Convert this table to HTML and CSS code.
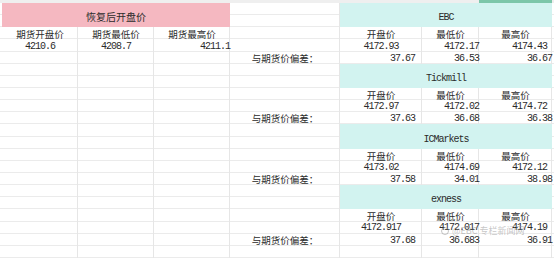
FILE: index.html
```html
<!DOCTYPE html>
<html lang="zh-CN">
<head>
<meta charset="utf-8">
<title>开盘价对比</title>
<link rel="stylesheet" href="styles.css">
</head>
<body>
<div class="page">
  <div class="colbar"><span class="colsel"></span></div>
  <div class="sheet">
    <div class="cell title pink" style="grid-row:1/3">恢复后开盘价</div>
    <div class="cell zh c-a" style="grid-row:3">期货开盘价</div>
    <div class="cell zh c-b" style="grid-row:3">期货最低价</div>
    <div class="cell zh c-c" style="grid-row:3">期货最高价</div>
    <div class="cell num c-a" style="grid-row:4">4210.6</div>
    <div class="cell num c-b" style="grid-row:4">4208.7</div>
    <div class="cell num c-c right" style="grid-row:4">4211.1</div>

    <div class="cell brand teal" style="grid-row:1/3">EBC</div>
    <div class="cell zh c-1" style="grid-row:3">开盘价</div>
    <div class="cell zh c-2" style="grid-row:3">最低价</div>
    <div class="cell zh c-3" style="grid-row:3">最高价</div>
    <div class="cell num c-1" style="grid-row:4">4172.93</div>
    <div class="cell num c-2 right" style="grid-row:4">4172.17</div>
    <div class="cell num c-3 right pad" style="grid-row:4">4174.43</div>
    <div class="cell zh c-d" style="grid-row:5">与期货价偏差：</div>
    <div class="cell num c-1 right pad1" style="grid-row:5">37.67</div>
    <div class="cell num c-2 right" style="grid-row:5">36.53</div>
    <div class="cell num c-3 right" style="grid-row:5">36.67</div>

    <div class="cell brand teal" style="grid-row:6/8">Tickmill</div>
    <div class="cell zh c-1" style="grid-row:8">开盘价</div>
    <div class="cell zh c-2" style="grid-row:8">最低价</div>
    <div class="cell zh c-3" style="grid-row:8">最高价</div>
    <div class="cell num c-1" style="grid-row:9">4172.97</div>
    <div class="cell num c-2 right" style="grid-row:9">4172.02</div>
    <div class="cell num c-3 right pad" style="grid-row:9">4174.72</div>
    <div class="cell zh c-d" style="grid-row:10">与期货价偏差：</div>
    <div class="cell num c-1 right pad1" style="grid-row:10">37.63</div>
    <div class="cell num c-2 right" style="grid-row:10">36.68</div>
    <div class="cell num c-3 right" style="grid-row:10">36.38</div>

    <div class="cell brand teal" style="grid-row:11/13">ICMarkets</div>
    <div class="cell zh c-1" style="grid-row:13">开盘价</div>
    <div class="cell zh c-2" style="grid-row:13">最低价</div>
    <div class="cell zh c-3" style="grid-row:13">最高价</div>
    <div class="cell num c-1" style="grid-row:14">4173.02</div>
    <div class="cell num c-2 right" style="grid-row:14">4174.69</div>
    <div class="cell num c-3 right pad" style="grid-row:14">4172.12</div>
    <div class="cell zh c-d" style="grid-row:15">与期货价偏差：</div>
    <div class="cell num c-1 right pad1" style="grid-row:15">37.58</div>
    <div class="cell num c-2 right" style="grid-row:15">34.01</div>
    <div class="cell num c-3 right" style="grid-row:15">38.98</div>

    <div class="cell brand teal" style="grid-row:16/18">exness</div>
    <div class="cell zh c-1" style="grid-row:18">开盘价</div>
    <div class="cell zh c-2" style="grid-row:18">最低价</div>
    <div class="cell zh c-3" style="grid-row:18">最高价</div>
    <div class="cell num c-1" style="grid-row:19">4172.917</div>
    <div class="cell num c-2 right" style="grid-row:19">4172.017</div>
    <div class="cell num c-3 right pad" style="grid-row:19">4174.19</div>
    <div class="cell zh c-d" style="grid-row:20">与期货价偏差：</div>
    <div class="cell num c-1 right pad1" style="grid-row:20">37.68</div>
    <div class="cell num c-2 right" style="grid-row:20">36.683</div>
    <div class="cell num c-3 right" style="grid-row:20">36.91</div>
  </div>
  <div class="watermark"><span class="wm-icon"></span>@EBC 专栏新闻网</div>
</div>
</body>
</html>
```

FILE: styles.css
```css
* { box-sizing: border-box; }
html, body { margin: 0; padding: 0; background: #fff; }
.page {
  position: relative;
  width: 554px;
  height: 258px;
  overflow: hidden;
  color: #2b2b2b;
}
.colbar {
  height: 3px;
  background: #efefef;
  display: flex;
  padding-left: 479px;
}
.colsel {
  width: 73px;
  height: 3px;
  background: #7cc6a9;
}
.sheet {
  display: grid;
  grid-template-columns: 2px 76px 76px 76px 110px 82px 57px 73px 2px;
  grid-template-rows: repeat(21, 12.14px);
  height: 255px;
  background-image:
    linear-gradient(#e6e6e6, #e6e6e6),
    linear-gradient(#e6e6e6, #e6e6e6),
    linear-gradient(#e6e6e6, #e6e6e6),
    linear-gradient(#e6e6e6, #e6e6e6),
    linear-gradient(#e6e6e6, #e6e6e6),
    linear-gradient(#e6e6e6, #e6e6e6),
    linear-gradient(#e6e6e6, #e6e6e6),
    repeating-linear-gradient(to bottom, transparent 0, transparent 11.14px, #ebebeb 11.14px, #ebebeb 12.14px);
  background-size: 1px 100%, 1px 100%, 1px 100%, 1px 100%, 1px 100%, 1px 100%, 1px 100%, 100% 100%;
  background-position: 77px 0, 153px 0, 229px 0, 339px 0, 421px 0, 478px 0, 551px 0, 0 0;
  background-repeat: no-repeat;
}
.cell {
  display: flex;
  align-items: flex-end;
  justify-content: center;
  white-space: nowrap;
  min-width: 0;
}
.zh {
  font-family: "Noto Sans CJK SC", sans-serif;
  font-size: 9.5px;
  line-height: 10px;
}
.num, .brand {
  font-family: "Liberation Mono", monospace;
  font-size: 10px;
  letter-spacing: -1px;
  line-height: 10px;
}
.right { justify-content: flex-end; }
.pad { padding-right: 5px; }
.pad1 { padding-right: 7px; }
.c-a { grid-column: 2; }
.c-b { grid-column: 3; }
.c-c { grid-column: 4; }
.c-d { grid-column: 5; padding-bottom: 1px; }
.c-1 { grid-column: 6; }
.c-2 { grid-column: 7; }
.c-3 { grid-column: 8; }
.title {
  grid-column: 2 / 5;
  font-family: "Noto Sans CJK SC", sans-serif;
  font-size: 10px;
  line-height: 10px;
  padding-bottom: 5px;
}
.pink { background: #f5b8c1; }
.brand {
  grid-column: 6 / 9;
  padding-bottom: 4px;
}
.teal { background: #d2f3f0; }
.watermark {
  position: absolute;
  left: 441px;
  top: 226px;
  display: flex;
  align-items: center;
  gap: 3px;
  font-family: "Noto Sans CJK SC", sans-serif;
  font-size: 9px;
  line-height: 10px;
  color: rgba(150, 150, 150, 0.55);
}
.wm-icon {
  width: 8px;
  height: 8px;
  border: 1px solid rgba(150, 150, 150, 0.55);
  border-radius: 50%;
}
```
